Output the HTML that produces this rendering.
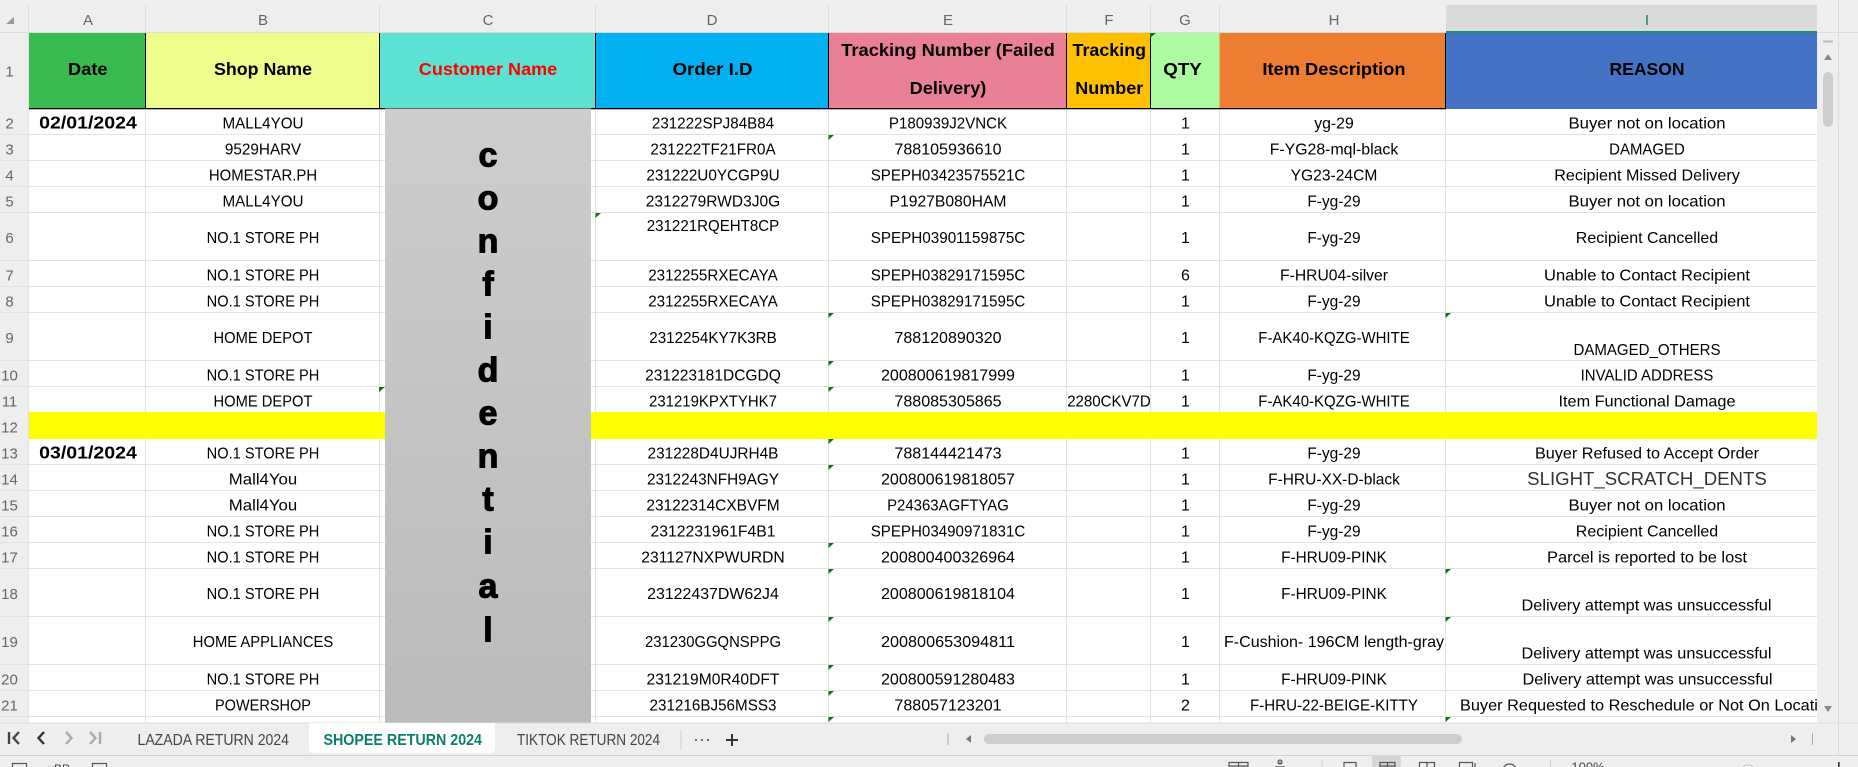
<!DOCTYPE html>
<html lang="en"><head><meta charset="utf-8"><title>SHOPEE RETURN 2024</title>
<style>
html,body{margin:0;padding:0;width:1858px;height:767px;overflow:hidden;background:#fff}
svg{display:block}
text{font-family:"Liberation Sans",sans-serif;font-size:16px;fill:#000;text-anchor:middle}
.h text{font-weight:700;font-size:17.5px}
.hd text{fill:#666;font-size:15px}
.conf text{font-weight:700;font-size:34px;stroke:#000;stroke-width:1.1px}
.s text{fill:#444;text-anchor:start;font-size:16px}
</style></head><body>
<svg width="1858" height="767" viewBox="0 0 1858 767" xmlns="http://www.w3.org/2000/svg">
<defs><linearGradient id="g" x1="0" y1="0" x2="0" y2="1"><stop offset="0" stop-color="#cdcdcd"/><stop offset="1" stop-color="#bbb"/></linearGradient></defs>
<rect width="1858" height="767" fill="#fff"/>
<!-- column & row header backgrounds -->
<rect width="1858" height="33" fill="#eee"/>
<rect y="0" width="28.5" height="723" fill="#eee"/>
<rect x="1446" y="5" width="371" height="27" fill="#dadada"/>
<rect x="1446" y="31" width="371" height="2" fill="#17936a"/>
<rect y="32" width="1446" height="1" fill="#dcdcdc"/>
<rect x="1817" y="32" width="41" height="1" fill="#dcdcdc"/>
<g fill="#dcdcdc"><rect x="28" y="5" width="1" height="27"/><rect x="145" y="5" width="1" height="27"/><rect x="379" y="5" width="1" height="27"/><rect x="595" y="5" width="1" height="27"/><rect x="828" y="5" width="1" height="27"/><rect x="1066" y="5" width="1" height="27"/><rect x="1150" y="5" width="1" height="27"/><rect x="1219" y="5" width="1" height="27"/></g>
<polygon points="14,17 14,24 6,24" fill="#999"/>
<!-- grid -->
<g fill="#e2e2e2">
<rect x="145" y="108" width="1" height="615"/><rect x="379" y="108" width="1" height="615"/><rect x="595" y="108" width="1" height="615"/><rect x="828" y="108" width="1" height="615"/><rect x="1066" y="108" width="1" height="615"/><rect x="1150" y="108" width="1" height="615"/><rect x="1219" y="108" width="1" height="615"/><rect x="1445" y="108" width="1" height="615"/><rect x="28" y="33" width="1" height="690"/>
<rect y="134" width="1817" height="1"/><rect y="160" width="1817" height="1"/><rect y="186" width="1817" height="1"/><rect y="212" width="1817" height="1"/><rect y="260" width="1817" height="1"/><rect y="286" width="1817" height="1"/><rect y="312" width="1817" height="1"/><rect y="360" width="1817" height="1"/><rect y="386" width="1817" height="1"/><rect y="464" width="1817" height="1"/><rect y="490" width="1817" height="1"/><rect y="516" width="1817" height="1"/><rect y="542" width="1817" height="1"/><rect y="568" width="1817" height="1"/><rect y="616" width="1817" height="1"/><rect y="664" width="1817" height="1"/><rect y="690" width="1817" height="1"/><rect y="716" width="1817" height="1"/>
</g>
<!-- header row -->
<rect x="29" y="33" width="116.500" height="75" fill="#39bb51"/>
<rect x="145.500" y="33" width="234" height="75" fill="#eefc8c"/>
<rect x="379.500" y="33" width="216" height="75" fill="#5be2d2"/>
<rect x="595.500" y="33" width="233" height="75" fill="#00b0f0"/>
<rect x="828.500" y="33" width="238" height="75" fill="#e98095"/>
<rect x="1066.500" y="33" width="84" height="75" fill="#ffc000"/>
<rect x="1150.500" y="33" width="69" height="75" fill="#adfba1"/>
<rect x="1219.500" y="33" width="226" height="75" fill="#ed7d31"/>
<rect x="1445.500" y="33" width="371.500" height="76" fill="#4472c4"/>
<g fill="#000"><rect x="29" y="108" width="1417" height="1.300"/><rect x="145" y="33" width="1" height="75"/><rect x="379" y="33" width="1" height="75"/><rect x="595" y="33" width="1" height="75"/><rect x="828" y="33" width="1" height="75"/><rect x="1066" y="33" width="1" height="75"/><rect x="1150" y="33" width="1" height="75"/><rect x="1445" y="33" width="1" height="76"/></g>
<!-- yellow -->
<rect x="29" y="412" width="1788" height="27" fill="#ff0"/>
<!-- confidential block -->
<rect x="385" y="108.500" width="206" height="614.500" fill="url(#g)"/>
<g class="conf">
<text x="488" y="166.300">c</text><text x="488" y="209.300">o</text><text x="488" y="252.300">n</text><text x="488" y="295.300">f</text><text x="488" y="338.300">i</text><text x="488" y="381.300">d</text><text x="488" y="424.300">e</text><text x="488" y="467.300">n</text><text x="488" y="510.300">t</text><text x="488" y="553.300">i</text><text x="488" y="597.300">a</text><text x="488" y="641.300">l</text>
</g>
<!-- column letters -->
<g class="hd">
<text x="88" y="25">A</text><text x="263" y="25">B</text><text x="488" y="25">C</text><text x="712" y="25">D</text><text x="948" y="25">E</text><text x="1109" y="25">F</text><text x="1185" y="25">G</text><text x="1334" y="25">H</text><text x="1647" y="25" style="fill:#17795a">I</text>
</g>
<!-- row numbers -->
<g class="hd">
<text x="9.500" y="76.500">1</text><text x="9.500" y="128.300">2</text><text x="9.500" y="154.300">3</text><text x="9.500" y="180.300">4</text><text x="9.500" y="206.300">5</text><text x="9.500" y="243">6</text><text x="9.500" y="280.300">7</text><text x="9.500" y="306.300">8</text><text x="9.500" y="343">9</text><text x="9.500" y="380.300">10</text><text x="9.500" y="406.300">11</text><text x="9.500" y="432.300">12</text><text x="9.500" y="458.300">13</text><text x="9.500" y="484.300">14</text><text x="9.500" y="510.300">15</text><text x="9.500" y="536.300">16</text><text x="9.500" y="562.300">17</text><text x="9.500" y="599">18</text><text x="9.500" y="647">19</text><text x="9.500" y="684.300">20</text><text x="9.500" y="710.300">21</text>
</g>
<!-- headers text -->
<g class="h">
<text x="87.800" y="75" textLength="39.500" lengthAdjust="spacingAndGlyphs">Date</text>
<text x="263" y="75" textLength="98" lengthAdjust="spacingAndGlyphs">Shop Name</text>
<text x="488" y="75" textLength="138.400" lengthAdjust="spacingAndGlyphs" style="fill:#f00">Customer Name</text>
<text x="712.500" y="75" textLength="80" lengthAdjust="spacingAndGlyphs">Order I.D</text>
<text x="948" y="56" textLength="213.500" lengthAdjust="spacingAndGlyphs">Tracking Number (Failed</text>
<text x="948" y="94" textLength="76.700" lengthAdjust="spacingAndGlyphs">Delivery)</text>
<text x="1109.300" y="56" textLength="73.500" lengthAdjust="spacingAndGlyphs">Tracking</text>
<text x="1109.300" y="94" textLength="68" lengthAdjust="spacingAndGlyphs">Number</text>
<text x="1182.500" y="75" textLength="38.400" lengthAdjust="spacingAndGlyphs">QTY</text>
<text x="1334" y="75" textLength="143.200" lengthAdjust="spacingAndGlyphs">Item Description</text>
<text x="1647" y="75" textLength="75" lengthAdjust="spacingAndGlyphs">REASON</text>
<text x="88" y="128.300" textLength="97.700" lengthAdjust="spacingAndGlyphs">02/01/2024</text>
<text x="88" y="458.300" textLength="97.700" lengthAdjust="spacingAndGlyphs">03/01/2024</text>
</g>
<!-- column B -->
<g>
<text x="263" y="128.300" textLength="81" lengthAdjust="spacingAndGlyphs">MALL4YOU</text>
<text x="263" y="154.300" textLength="76.300" lengthAdjust="spacingAndGlyphs">9529HARV</text>
<text x="263" y="180.300" textLength="108.300" lengthAdjust="spacingAndGlyphs">HOMESTAR.PH</text>
<text x="263" y="206.300" textLength="81" lengthAdjust="spacingAndGlyphs">MALL4YOU</text>
<text x="263" y="243" textLength="112.700" lengthAdjust="spacingAndGlyphs">NO.1 STORE PH</text>
<text x="263" y="280.300" textLength="112.700" lengthAdjust="spacingAndGlyphs">NO.1 STORE PH</text>
<text x="263" y="306.300" textLength="112.700" lengthAdjust="spacingAndGlyphs">NO.1 STORE PH</text>
<text x="263" y="343" textLength="98.900" lengthAdjust="spacingAndGlyphs">HOME DEPOT</text>
<text x="263" y="380.300" textLength="112.700" lengthAdjust="spacingAndGlyphs">NO.1 STORE PH</text>
<text x="263" y="406.300" textLength="98.900" lengthAdjust="spacingAndGlyphs">HOME DEPOT</text>
<text x="263" y="458.300" textLength="112.700" lengthAdjust="spacingAndGlyphs">NO.1 STORE PH</text>
<text x="263" y="484.300" textLength="68.400" lengthAdjust="spacingAndGlyphs">Mall4You</text>
<text x="263" y="510.300" textLength="68.400" lengthAdjust="spacingAndGlyphs">Mall4You</text>
<text x="263" y="536.300" textLength="112.700" lengthAdjust="spacingAndGlyphs">NO.1 STORE PH</text>
<text x="263" y="562.300" textLength="112.700" lengthAdjust="spacingAndGlyphs">NO.1 STORE PH</text>
<text x="263" y="599" textLength="112.700" lengthAdjust="spacingAndGlyphs">NO.1 STORE PH</text>
<text x="263" y="647" textLength="140.400" lengthAdjust="spacingAndGlyphs">HOME APPLIANCES</text>
<text x="263" y="684.300" textLength="112.700" lengthAdjust="spacingAndGlyphs">NO.1 STORE PH</text>
<text x="263" y="710.300" textLength="96" lengthAdjust="spacingAndGlyphs">POWERSHOP</text>
</g>
<!-- column D -->
<g>
<text x="713" y="128.300" textLength="122.200" lengthAdjust="spacingAndGlyphs">231222SPJ84B84</text>
<text x="713" y="154.300" textLength="125.300" lengthAdjust="spacingAndGlyphs">231222TF21FR0A</text>
<text x="713" y="180.300" textLength="133.300" lengthAdjust="spacingAndGlyphs">231222U0YCGP9U</text>
<text x="713" y="206.300" textLength="134.400" lengthAdjust="spacingAndGlyphs">2312279RWD3J0G</text>
<text x="713" y="231" textLength="132.500" lengthAdjust="spacingAndGlyphs">231221RQEHT8CP</text>
<text x="713" y="280.300" textLength="129.600" lengthAdjust="spacingAndGlyphs">2312255RXECAYA</text>
<text x="713" y="306.300" textLength="129.600" lengthAdjust="spacingAndGlyphs">2312255RXECAYA</text>
<text x="713" y="343" textLength="127.500" lengthAdjust="spacingAndGlyphs">2312254KY7K3RB</text>
<text x="713" y="380.300" textLength="135.700" lengthAdjust="spacingAndGlyphs">231223181DCGDQ</text>
<text x="713" y="406.300" textLength="127.900" lengthAdjust="spacingAndGlyphs">231219KPXTYHK7</text>
<text x="713" y="458.300" textLength="130.900" lengthAdjust="spacingAndGlyphs">231228D4UJRH4B</text>
<text x="713" y="484.300" textLength="132" lengthAdjust="spacingAndGlyphs">2312243NFH9AGY</text>
<text x="713" y="510.300" textLength="133.300" lengthAdjust="spacingAndGlyphs">23122314CXBVFM</text>
<text x="713" y="536.300" textLength="125" lengthAdjust="spacingAndGlyphs">2312231961F4B1</text>
<text x="713" y="562.300" textLength="143.500" lengthAdjust="spacingAndGlyphs">231127NXPWURDN</text>
<text x="713" y="599" textLength="131.700" lengthAdjust="spacingAndGlyphs">23122437DW62J4</text>
<text x="713" y="647" textLength="136" lengthAdjust="spacingAndGlyphs">231230GGQNSPPG</text>
<text x="713" y="684.300" textLength="132.900" lengthAdjust="spacingAndGlyphs">231219M0R40DFT</text>
<text x="713" y="710.300" textLength="127" lengthAdjust="spacingAndGlyphs">231216BJ56MSS3</text>
</g>
<!-- column E -->
<g>
<text x="948" y="128.300" textLength="118.200" lengthAdjust="spacingAndGlyphs">P180939J2VNCK</text>
<text x="948" y="154.300" textLength="107.200" lengthAdjust="spacingAndGlyphs">788105936610</text>
<text x="948" y="180.300" textLength="154.600" lengthAdjust="spacingAndGlyphs">SPEPH03423575521C</text>
<text x="948" y="206.300" textLength="117" lengthAdjust="spacingAndGlyphs">P1927B080HAM</text>
<text x="948" y="243" textLength="154.600" lengthAdjust="spacingAndGlyphs">SPEPH03901159875C</text>
<text x="948" y="280.300" textLength="154.600" lengthAdjust="spacingAndGlyphs">SPEPH03829171595C</text>
<text x="948" y="306.300" textLength="154.600" lengthAdjust="spacingAndGlyphs">SPEPH03829171595C</text>
<text x="948" y="343" textLength="107.200" lengthAdjust="spacingAndGlyphs">788120890320</text>
<text x="948" y="380.300" textLength="134" lengthAdjust="spacingAndGlyphs">200800619817999</text>
<text x="948" y="406.300" textLength="107.200" lengthAdjust="spacingAndGlyphs">788085305865</text>
<text x="948" y="458.300" textLength="107.200" lengthAdjust="spacingAndGlyphs">788144421473</text>
<text x="948" y="484.300" textLength="134" lengthAdjust="spacingAndGlyphs">200800619818057</text>
<text x="948" y="510.300" textLength="121.800" lengthAdjust="spacingAndGlyphs">P24363AGFTYAG</text>
<text x="948" y="536.300" textLength="154.600" lengthAdjust="spacingAndGlyphs">SPEPH03490971831C</text>
<text x="948" y="562.300" textLength="134" lengthAdjust="spacingAndGlyphs">200800400326964</text>
<text x="948" y="599" textLength="134" lengthAdjust="spacingAndGlyphs">200800619818104</text>
<text x="948" y="647" textLength="134" lengthAdjust="spacingAndGlyphs">200800653094811</text>
<text x="948" y="684.300" textLength="134" lengthAdjust="spacingAndGlyphs">200800591280483</text>
<text x="948" y="710.300" textLength="107.200" lengthAdjust="spacingAndGlyphs">788057123201</text>
<text x="1109" y="406.300" textLength="83.600" lengthAdjust="spacingAndGlyphs">2280CKV7D</text>
</g>
<!-- column G -->
<g>
<text x="1185.500" y="128.300">1</text><text x="1185.500" y="154.300">1</text><text x="1185.500" y="180.300">1</text><text x="1185.500" y="206.300">1</text><text x="1185.500" y="243">1</text><text x="1185.500" y="280.300">6</text><text x="1185.500" y="306.300">1</text><text x="1185.500" y="343">1</text><text x="1185.500" y="380.300">1</text><text x="1185.500" y="406.300">1</text><text x="1185.500" y="458.300">1</text><text x="1185.500" y="484.300">1</text><text x="1185.500" y="510.300">1</text><text x="1185.500" y="536.300">1</text><text x="1185.500" y="562.300">1</text><text x="1185.500" y="599">1</text><text x="1185.500" y="647">1</text><text x="1185.500" y="684.300">1</text><text x="1185.500" y="710.300">2</text>
</g>
<!-- column H -->
<g>
<text x="1334" y="128.300" textLength="39.500" lengthAdjust="spacingAndGlyphs">yg-29</text>
<text x="1334" y="154.300" textLength="128.600" lengthAdjust="spacingAndGlyphs">F-YG28-mql-black</text>
<text x="1334" y="180.300" textLength="86.700" lengthAdjust="spacingAndGlyphs">YG23-24CM</text>
<text x="1334" y="206.300" textLength="53.300" lengthAdjust="spacingAndGlyphs">F-yg-29</text>
<text x="1334" y="243" textLength="53.300" lengthAdjust="spacingAndGlyphs">F-yg-29</text>
<text x="1334" y="280.300" textLength="107.900" lengthAdjust="spacingAndGlyphs">F-HRU04-silver</text>
<text x="1334" y="306.300" textLength="53.300" lengthAdjust="spacingAndGlyphs">F-yg-29</text>
<text x="1334" y="343" textLength="151.400" lengthAdjust="spacingAndGlyphs">F-AK40-KQZG-WHITE</text>
<text x="1334" y="380.300" textLength="53.300" lengthAdjust="spacingAndGlyphs">F-yg-29</text>
<text x="1334" y="406.300" textLength="151.400" lengthAdjust="spacingAndGlyphs">F-AK40-KQZG-WHITE</text>
<text x="1334" y="458.300" textLength="53.300" lengthAdjust="spacingAndGlyphs">F-yg-29</text>
<text x="1334" y="484.300" textLength="131.800" lengthAdjust="spacingAndGlyphs">F-HRU-XX-D-black</text>
<text x="1334" y="510.300" textLength="53.300" lengthAdjust="spacingAndGlyphs">F-yg-29</text>
<text x="1334" y="536.300" textLength="53.300" lengthAdjust="spacingAndGlyphs">F-yg-29</text>
<text x="1334" y="562.300" textLength="105.800" lengthAdjust="spacingAndGlyphs">F-HRU09-PINK</text>
<text x="1334" y="599" textLength="105.800" lengthAdjust="spacingAndGlyphs">F-HRU09-PINK</text>
<text x="1334" y="647" textLength="220" lengthAdjust="spacingAndGlyphs">F-Cushion- 196CM length-gray</text>
<text x="1334" y="684.300" textLength="105.800" lengthAdjust="spacingAndGlyphs">F-HRU09-PINK</text>
<text x="1334" y="710.300" textLength="168" lengthAdjust="spacingAndGlyphs">F-HRU-22-BEIGE-KITTY</text>
</g>
<!-- column I -->
<g>
<text x="1647" y="128.300" textLength="157" lengthAdjust="spacingAndGlyphs">Buyer not on location</text>
<text x="1647" y="154.300" textLength="75.700" lengthAdjust="spacingAndGlyphs">DAMAGED</text>
<text x="1647" y="180.300" textLength="185.500" lengthAdjust="spacingAndGlyphs">Recipient Missed Delivery</text>
<text x="1647" y="206.300" textLength="157" lengthAdjust="spacingAndGlyphs">Buyer not on location</text>
<text x="1647" y="243" textLength="142.400" lengthAdjust="spacingAndGlyphs">Recipient Cancelled</text>
<text x="1647" y="280.300" textLength="206" lengthAdjust="spacingAndGlyphs">Unable to Contact Recipient</text>
<text x="1647" y="306.300" textLength="206" lengthAdjust="spacingAndGlyphs">Unable to Contact Recipient</text>
<text x="1647" y="355" textLength="147" lengthAdjust="spacingAndGlyphs">DAMAGED_OTHERS</text>
<text x="1647" y="380.300" textLength="132.700" lengthAdjust="spacingAndGlyphs">INVALID ADDRESS</text>
<text x="1647" y="406.300" textLength="177" lengthAdjust="spacingAndGlyphs">Item Functional Damage</text>
<text x="1647" y="458.300" textLength="224" lengthAdjust="spacingAndGlyphs">Buyer Refused to Accept Order</text>
<text x="1647" y="485" textLength="239.600" lengthAdjust="spacingAndGlyphs" style="font-size:18px;fill:#333">SLIGHT_SCRATCH_DENTS</text>
<text x="1647" y="510.300" textLength="157" lengthAdjust="spacingAndGlyphs">Buyer not on location</text>
<text x="1647" y="536.300" textLength="142.400" lengthAdjust="spacingAndGlyphs">Recipient Cancelled</text>
<text x="1647" y="562.300" textLength="200" lengthAdjust="spacingAndGlyphs">Parcel is reported to be lost</text>
<text x="1646.500" y="610.700" textLength="250" lengthAdjust="spacingAndGlyphs">Delivery attempt was unsuccessful</text>
<text x="1646.500" y="658.700" textLength="250" lengthAdjust="spacingAndGlyphs">Delivery attempt was unsuccessful</text>
<text x="1647.500" y="684.300" textLength="250" lengthAdjust="spacingAndGlyphs">Delivery attempt was unsuccessful</text>
<text x="1648" y="710.300" textLength="376" lengthAdjust="spacingAndGlyphs">Buyer Requested to Reschedule or Not On Location</text>
</g>
<!-- comment triangles -->
<g fill="#0b7a16">
<polygon points="1150,33 1156,33 1150,38"/>
<polygon points="828.500,135 834,135 828.500,140"/>
<polygon points="595.500,213 601,213 595.500,218"/>
<polygon points="828.500,313 834,313 828.500,318"/>
<polygon points="828.500,361 834,361 828.500,366"/>
<polygon points="828.500,387 834,387 828.500,392"/>
<polygon points="379,387 385,387 379,392"/>
<polygon points="1445.500,313 1451,313 1445.500,318"/>
<polygon points="828.500,439 834,439 828.500,444"/>
<polygon points="828.500,465 834,465 828.500,470"/>
<polygon points="828.500,543 834,543 828.500,548"/>
<polygon points="828.500,569 834,569 828.500,574"/>
<polygon points="828.500,617 834,617 828.500,622"/>
<polygon points="828.500,665 834,665 828.500,670"/>
<polygon points="828.500,691 834,691 828.500,696"/>
<polygon points="828.500,717 834,717 828.500,722"/>
<polygon points="1445.500,569 1451,569 1445.500,574"/>
<polygon points="1445.500,617 1451,617 1445.500,622"/>
<polygon points="1445.500,717 1451,717 1445.500,722"/>
</g>
<!-- right scrollbar panel -->
<rect x="1817" y="33" width="41" height="690" fill="#eee"/>
<rect x="1838" y="0" width="1" height="755" fill="#d9d9d9"/>
<rect x="1817" y="32" width="41" height="1" fill="#dcdcdc"/>
<rect x="1823" y="40.500" width="10" height="2" fill="#bbb"/>
<polygon points="1828,54 1832,60 1824,60" fill="#888"/>
<rect x="1823" y="72" width="10" height="55" rx="5" fill="#cdcdcd"/>
<polygon points="1828,712 1832,706 1824,706" fill="#888"/>
<!-- tab bar -->
<rect y="723" width="1858" height="32" fill="#eee"/>
<rect x="1838" y="723" width="1" height="32" fill="#d9d9d9"/>
<rect y="722.500" width="1858" height="1" fill="#dcdcdc"/>
<rect y="755" width="1858" height="1" fill="#d2d2d2"/>
<rect y="756" width="1858" height="11" fill="#eee"/>
<path d="M309 723 H495 V748 Q495 753 490 753 H314 Q309 753 309 748 Z" fill="#fff"/>
<g fill="none" stroke-width="2.400">
<path d="M9 732V744M19 732 13.500 738 19 744" stroke="#444"/>
<path d="M44 732 38.500 738 44 744" stroke="#333"/>
<path d="M66 732 71.500 738 66 744" stroke="#aaa"/>
<path d="M90 732 95.500 738 90 744M100 732V744" stroke="#aaa"/>
</g>
<g class="s">
<text x="137.500" y="745" textLength="151.500" lengthAdjust="spacingAndGlyphs">LAZADA RETURN 2024</text>
<text x="323.500" y="745" textLength="158.500" lengthAdjust="spacingAndGlyphs" style="font-weight:700;fill:#0a7f6e">SHOPEE RETURN 2024</text>
<text x="517" y="745" textLength="143" lengthAdjust="spacingAndGlyphs">TIKTOK RETURN 2024</text>
</g>
<rect x="680.500" y="730" width="1" height="20" fill="#d0d0d0"/>
<g fill="#444"><circle cx="696" cy="740" r="1"/><circle cx="702" cy="740" r="1"/><circle cx="708" cy="740" r="1"/></g>
<path d="M732 734V746M726 740H738" stroke="#333" stroke-width="2" fill="none"/>
<rect x="947.500" y="733" width="1" height="12" fill="#aaa"/>
<polygon points="966,739 971,735 971,743" fill="#777"/>
<rect x="984" y="734" width="478" height="10" rx="5" fill="#cdcdcd"/>
<polygon points="1796,739 1791,735 1791,743" fill="#777"/>
<rect x="1812" y="733" width="1" height="12" fill="#aaa"/>
<!-- status bar (clipped) -->
<rect x="1372" y="755.500" width="29" height="11.500" rx="2" fill="#d6d6d6"/>
<g fill="none" stroke="#555" stroke-width="1.200">
<rect x="12.500" y="763.500" width="14" height="10"/>
<rect x="92.500" y="763.500" width="14" height="10"/>
<rect x="1229" y="762.500" width="19" height="10"/><path d="M1229 766H1248M1238.500 762.500V772"/>
<path d="M1280 761.500v3M1275 767h10"/><circle cx="1280" cy="762" r="2"/>
<rect x="1344" y="762.500" width="12" height="10"/>
<rect x="1380" y="762.500" width="15" height="10"/><path d="M1380 766H1395M1387.500 762.500V772"/>
<rect x="1419.500" y="762.500" width="15" height="10"/><path d="M1427 762.500V772"/>
<rect x="1459.500" y="762.500" width="13" height="10"/><path d="M1475 763V772"/>
<circle cx="1509.500" cy="771" r="7"/>
</g>
<text x="59" y="773" style="font-size:12px;fill:#444">xBP</text>
<rect x="1321.500" y="760" width="1" height="7" fill="#ccc"/>
<rect x="1550" y="760" width="1" height="7" fill="#ccc"/>
<text x="1588" y="771.500" style="font-size:13px;fill:#444">100%</text>
<circle cx="1748" cy="771" r="6" fill="#fff" stroke="#bbb"/>
<rect x="1838" y="762" width="1.600" height="5" fill="#333"/>
</svg>
</body></html>
